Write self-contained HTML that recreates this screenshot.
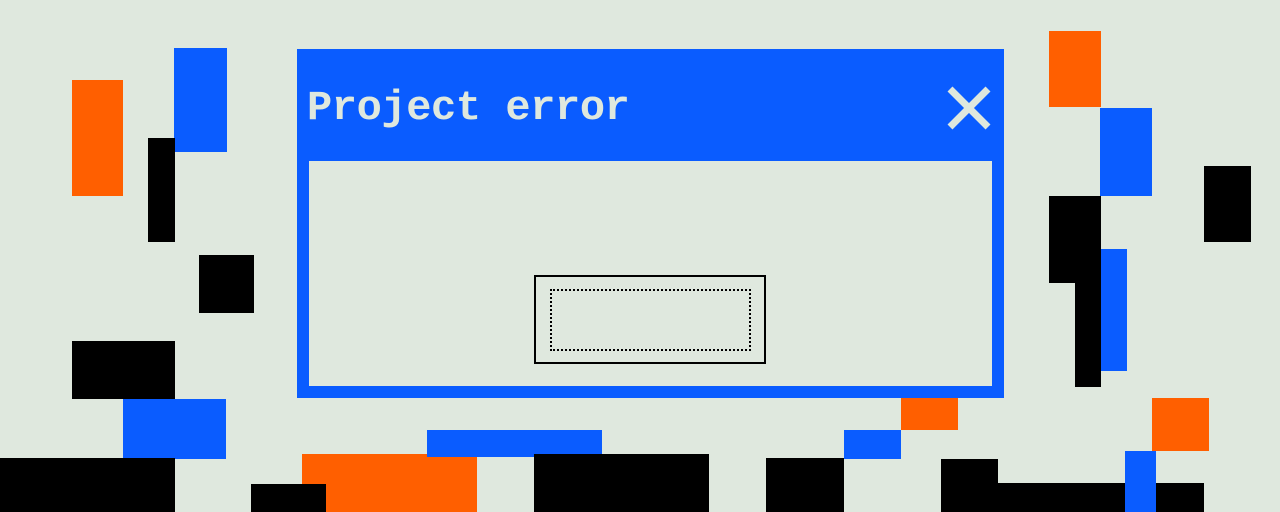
<!DOCTYPE html><html><head><style>
body{margin:0;width:1280px;height:512px;background:#dfe8de;position:relative;overflow:hidden}
div{position:absolute}
.b{background:#0a5cff}.o{background:#ff5f00}.k{background:#000}
</style></head><body>
<div class="o" style="left:72px;top:80px;width:51px;height:116px"></div>
<div class="b" style="left:174px;top:48px;width:53px;height:104px"></div>
<div class="k" style="left:148px;top:138px;width:27px;height:104px"></div>
<div class="k" style="left:199px;top:255px;width:55px;height:58px"></div>
<div class="k" style="left:72px;top:341px;width:103px;height:58px"></div>
<div class="b" style="left:123px;top:399px;width:103px;height:60px"></div>
<div class="k" style="left:0;top:458px;width:175px;height:54px"></div>
<div class="o" style="left:302px;top:454px;width:175px;height:58px"></div>
<div class="k" style="left:251px;top:484px;width:75px;height:28px"></div>
<div class="b" style="left:427px;top:430px;width:175px;height:27px"></div>
<div class="k" style="left:534px;top:454px;width:175px;height:58px"></div>
<div class="k" style="left:766px;top:458px;width:78px;height:54px"></div>
<div class="b" style="left:844px;top:430px;width:57px;height:29px"></div>
<div class="o" style="left:901px;top:398px;width:57px;height:32px"></div>
<div class="k" style="left:941px;top:459px;width:57px;height:53px"></div>
<div class="k" style="left:998px;top:483px;width:206px;height:29px"></div>
<div class="o" style="left:1152px;top:398px;width:57px;height:53px"></div>
<div class="b" style="left:1125px;top:451px;width:31px;height:61px"></div>
<div class="o" style="left:1049px;top:31px;width:52px;height:76px"></div>
<div class="b" style="left:1100px;top:108px;width:52px;height:88px"></div>
<div class="k" style="left:1204px;top:166px;width:47px;height:76px"></div>
<div class="k" style="left:1049px;top:196px;width:52px;height:87px"></div>
<div class="k" style="left:1075px;top:283px;width:26px;height:104px"></div>
<div class="b" style="left:1101px;top:249px;width:26px;height:122px"></div>
<div class="b" style="left:297px;top:49px;width:707px;height:349px"></div>
<div style="left:309px;top:161px;width:683px;height:225px;background:#dfe8de"></div>
<div style="left:307px;top:84px;font:bold 42px 'Liberation Mono',monospace;color:#dfe8de;letter-spacing:-0.4px">Project error</div>
<svg style="position:absolute;left:946px;top:86px" width="46" height="44"><path d="M4 3L42 41M42 3L4 41" stroke="#dfe8de" stroke-width="7"/></svg>
<div style="left:534px;top:275px;width:228px;height:85px;border:2px solid #000"></div>
<div style="left:550px;top:289px;width:197px;height:58px;border:2px dotted #000"></div>
</body></html>
